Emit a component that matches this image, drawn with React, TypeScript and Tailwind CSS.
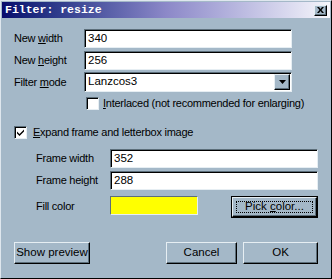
import type {ReactNode} from 'react';

const sunken =
    'border border-t-[#5c6e7a] border-l-[#5c6e7a] border-r-[#e6eef3] border-b-[#e6eef3] shadow-[inset_1px_1px_0_#000]';
const raised =
    'border border-t-[#e6eef3] border-l-[#e6eef3] border-r-[#000] border-b-[#000] shadow-[inset_-1px_-1px_0_#5c6e7a]';

function Label({children, className = ''}: {children: ReactNode; className?: string}) {
    return <span className={`shrink-0 text-[11px] leading-none tracking-[-0.25px] text-black ${className}`}>{children}</span>;
}

function TextBox({value, className = ''}: {value: string; className?: string}) {
    return (
        <div className={`flex h-[19px] items-center bg-white pl-[3px] text-[11.5px] text-black ${sunken} ${className}`}>
            {value}
        </div>
    );
}

function CheckBox({checked}: {checked?: boolean}) {
    return (
        <span className={`flex size-[13px] shrink-0 items-center justify-center bg-white ${sunken}`}>
            {checked && (
                <svg width="9" height="9" viewBox="0 0 9 9">
                    <path d="M1 3.5 L3.5 6 L8 1.5 L8 3.5 L3.5 8 L1 5.5 Z" fill="#000"/>
                </svg>
            )}
        </span>
    );
}

function Button({children, className = '', isDefault}: {children: ReactNode; className?: string; isDefault?: boolean}) {
    if (isDefault) {
        return (
            <div className={`h-[22px] border border-black ${className}`}>
                <div className={`flex h-full items-center justify-center bg-[#a4b8c8] p-[3px] ${raised}`}>
                    <div className="flex h-full w-full items-center justify-center border border-dotted border-black text-[11.5px]">
                        <span>{children}</span>
                    </div>
                </div>
            </div>
        );
    }
    return (
        <div className={`flex h-[22px] items-center justify-center bg-[#a4b8c8] text-[11.5px] ${raised} ${className}`}>
            <span>{children}</span>
        </div>
    );
}

export default function App() {
    return (
        <div
            className="flex h-[279px] w-[332px] flex-col border border-t-[#dfe7ee] border-l-[#dfe7ee] border-r-black border-b-black bg-[#a4b8c8] text-black"
            style={{fontFamily: '"Liberation Sans", Arial, sans-serif'}}
        >
            <div className="mx-px mt-px flex h-[16px] items-center justify-between bg-gradient-to-r from-[#0a0a6c] via-[#8c88c8] to-[#f6f6fb] pl-[3px] pr-[3px]">
                <span
                    className="text-[11.5px] font-bold leading-none text-white"
                    style={{fontFamily: '"Liberation Mono", "Courier New", monospace'}}
                >
                    Filter: resize
                </span>
                <span className={`flex h-[11px] w-[13px] items-center justify-center bg-[#a4b8c8] ${raised}`}>
                    <svg width="7" height="6" viewBox="0 0 7 6">
                        <path d="M0 0 L2 0 L3.5 2 L5 0 L7 0 L4.5 3 L7 6 L5 6 L3.5 4 L2 6 L0 6 L2.5 3 Z" fill="#000"/>
                    </svg>
                </span>
            </div>

            <div className="mt-[11px] flex h-[19px] items-center pl-[13px]">
                <Label className="w-[70px]">New <u>w</u>idth</Label>
                <TextBox value="340" className="w-[208px]"/>
            </div>
            <div className="mt-[3px] flex h-[19px] items-center pl-[13px]">
                <Label className="w-[70px]">New <u>h</u>eight</Label>
                <TextBox value="256" className="w-[208px]"/>
            </div>
            <div className="mt-[2px] flex h-[20px] items-center pl-[13px]">
                <Label className="w-[70px]">Filter <u>m</u>ode</Label>
                <div className={`flex h-[20px] w-[208px] items-center justify-between bg-white pl-[3px] text-[11.5px] ${sunken}`}>
                    <span>Lanzcos3</span>
                    <span className={`mr-px flex h-[16px] w-[16px] items-center justify-center bg-[#a4b8c8] ${raised}`}>
                        <svg width="7" height="4" viewBox="0 0 7 4">
                            <path d="M0 0 L7 0 L3.5 4 Z" fill="#000"/>
                        </svg>
                    </span>
                </div>
            </div>
            <div className="mt-[5px] flex h-[13px] items-center gap-[4px] pl-[85px]">
                <CheckBox/>
                <Label><u>I</u>nterlaced (not recommended for enlarging)</Label>
            </div>

            <div className="mt-[16px] flex h-[13px] items-center gap-[6px] pl-[13px]">
                <CheckBox checked/>
                <Label><u>E</u>xpand frame and letterbox image</Label>
            </div>

            <div className="mt-[10px] flex h-[19px] items-center pl-[35px]">
                <Label className="w-[74px]">Frame width</Label>
                <TextBox value="352" className="w-[208px]"/>
            </div>
            <div className="mt-[3px] flex h-[19px] items-center pl-[35px]">
                <Label className="w-[74px]">Frame height</Label>
                <TextBox value="288" className="w-[208px]"/>
            </div>
            <div className="mt-[6px] flex h-[22px] items-start pl-[35px]">
                <Label className="mt-[5px] w-[74px]">Fill color</Label>
                <div className="h-[19px] w-[88px] border border-t-[#5c6e7a] border-l-[#5c6e7a] border-r-[#e6eef3] border-b-[#e6eef3] bg-[#ffff00]"/>
                <Button isDefault className="ml-[33px] w-[87px]">Pick <u>c</u>olor...</Button>
            </div>

            <div className="mt-[24px] flex items-center pl-[13px]">
                <Button className="w-[76px]">Show preview</Button>
                <Button className="ml-[76px] w-[71px]">Cancel</Button>
                <Button className="ml-[6px] w-[75px]">OK</Button>
            </div>
        </div>
    );
}
